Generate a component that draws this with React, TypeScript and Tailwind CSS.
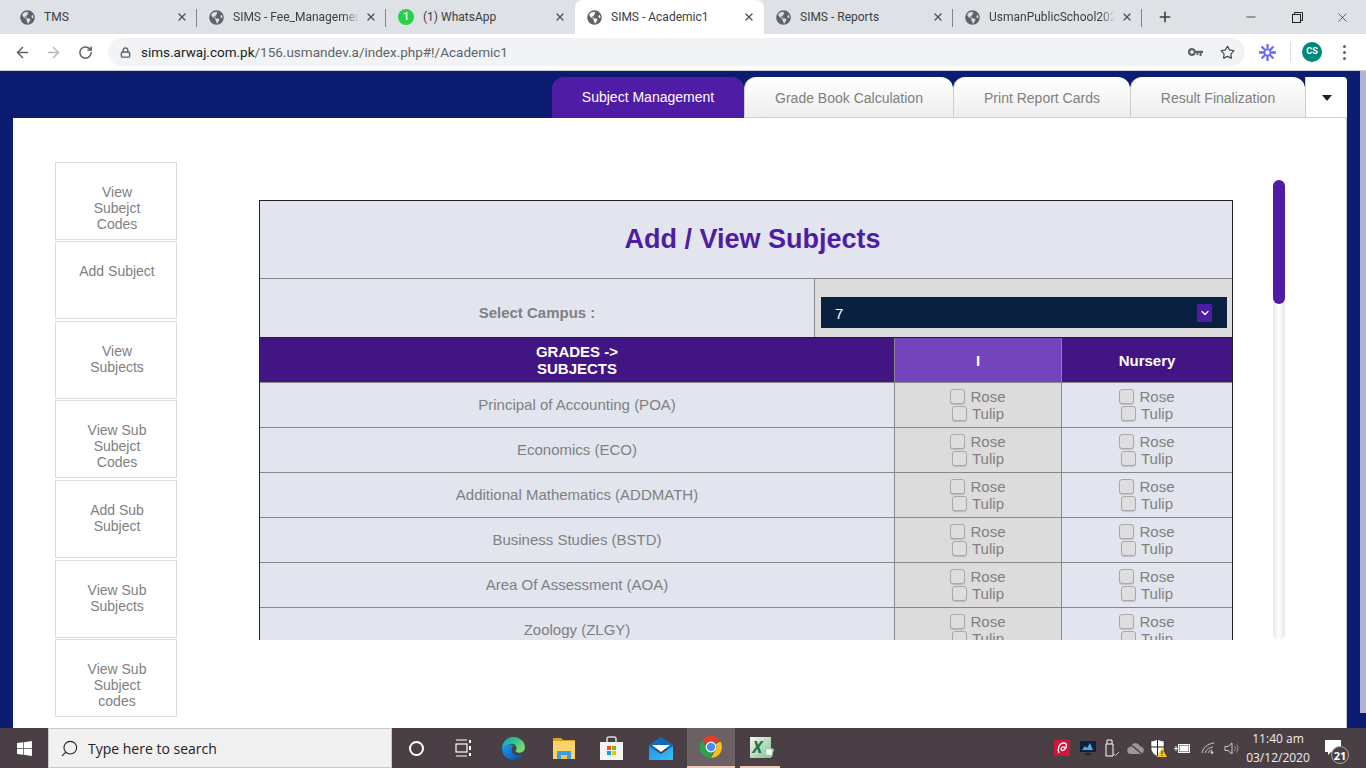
import React from "react";
import { FaGlobeAmericas, FaWindows } from "react-icons/fa";
import { ArrowLeft, ArrowRight, RotateCw, Lock, Star, X, Plus, Minus, ChevronDown, Search } from "lucide-react";

const tabs = [
  { t: "TMS" },
  { t: "SIMS - Fee_Management", fade: true },
  { t: "(1) WhatsApp", wa: true },
  { t: "SIMS - Academic1", active: true },
  { t: "SIMS - Reports" },
  { t: "UsmanPublicSchool2020", fade: true },
];

function ChromeTab({ t, fade, wa, active, sep }: { t: string; fade?: boolean; wa?: boolean; active?: boolean; sep?: boolean }) {
  return (
    <div className={`relative flex h-[34px] w-[189px] shrink-0 items-center pl-[12px] pr-[9px] ${active ? "rounded-t-[8px] bg-white" : ""}`}>
      {wa ? (
        <span className="flex h-[16px] w-[16px] shrink-0 items-center justify-center rounded-full bg-[#25d34a] text-[10px] font-bold leading-none text-white">1</span>
      ) : (
        <FaGlobeAmericas className="h-[15px] w-[15px] shrink-0 text-[#5f6368]" />
      )}
      <span className={`ml-[9px] overflow-hidden whitespace-nowrap text-[12px] text-[#3c4043] ${fade ? "w-[126px] [mask-image:linear-gradient(to_right,black_88%,transparent)]" : "w-[130px]"}`}>{t}</span>
      <X className="ml-auto h-[12px] w-[12px] shrink-0 text-[#4a4d51]" strokeWidth={2.6} />
      {sep && <span className="absolute right-0 top-[9px] h-[18px] w-px bg-[#80868b]" />}
    </div>
  );
}

function ChromeBar() {
  return (
    <div className="flex h-[34px] items-start bg-[#dee1e6] pl-[8px]" style={{ fontFamily: "Roboto, sans-serif" }}>
      {tabs.map((x, i) => (
        <ChromeTab key={x.t} {...x} sep={i === 0 || i === 1 || i === 4 || i === 5} />
      ))}
      <Plus className="ml-[15px] mt-[9px] h-[16px] w-[16px] text-[#3c4043]" strokeWidth={2.4} />
      <Minus className="ml-[71px] mt-[10px] h-[14px] w-[14px] text-[#222]" strokeWidth={1.3} />
      <svg className="ml-[34px] mt-[12px] h-[11px] w-[11px]" viewBox="0 0 11 11" fill="none" stroke="#222" strokeWidth="1">
        <rect x="0.5" y="2.5" width="8" height="8" />
        <path d="M2.5 2.5V0.5H10.5V8.5H8.5" />
      </svg>
      <X className="ml-[32px] mt-[10px] h-[15px] w-[15px] text-[#222]" strokeWidth={1.1} />
    </div>
  );
}

function Toolbar() {
  return (
    <div className="flex h-[37px] items-center border-b border-[#ccd0d5] bg-white" style={{ fontFamily: "Roboto, sans-serif" }}>
      <ArrowLeft className="ml-[14px] h-[17px] w-[17px] text-[#5f6368]" strokeWidth={2.2} />
      <ArrowRight className="ml-[14px] h-[17px] w-[17px] text-[#b6b9bd]" strokeWidth={2.2} />
      <RotateCw className="ml-[16px] h-[15px] w-[15px] text-[#5f6368]" strokeWidth={2.4} />
      <div className="ml-[15px] flex h-[28px] w-[1137px] items-center rounded-full bg-[#f1f3f4]">
        <Lock className="ml-[12px] h-[11px] w-[11px] text-[#5f6368]" strokeWidth={3} />
        <span className="ml-[10px] text-[13.5px] text-[#5f6368]"><span className="text-[#202124]">sims.arwaj.com.pk</span>/156.usmandev.a/index.php#!/Academic1</span>
        <svg className="ml-auto h-[8px] w-[15px]" viewBox="0 0 15 8" fill="#5f6368">
          <path d="M4 0a4 4 0 0 1 3.8 2.7H15V5h-1.4v3h-2V5h-1.2v2H8.5V5h-.7A4 4 0 1 1 4 0zm0 2.2a1.8 1.8 0 1 0 0 3.6 1.8 1.8 0 0 0 0-3.6z" />
        </svg>
        <Star className="ml-[17px] mr-[10px] h-[15px] w-[15px] text-[#4a4d51]" strokeWidth={2} />
      </div>
      <svg className="ml-[14px] h-[17px] w-[17px]" viewBox="0 0 18 18" stroke="#6a6cf0" strokeWidth="2.4" fill="none">
        <path d="M9 0v18M0 9h18M2.700 2.700l12.600 12.600M15.300 2.700L2.700 15.300" />
        <circle cx="9" cy="9" r="3.200" fill="#fff" strokeWidth="1.800" />
      </svg>
      <span className="ml-[14px] h-[20px] w-px bg-[#dadce0]" />
      <span className="ml-[11px] flex h-[20px] w-[20px] items-center justify-center rounded-full bg-[#00897b] text-[9px] font-bold text-white">CS</span>
      <span className="ml-[21px] flex flex-col gap-[3px]">
        <i className="h-[3px] w-[3px] rounded-full bg-[#5f6368]" />
        <i className="h-[3px] w-[3px] rounded-full bg-[#5f6368]" />
        <i className="h-[3px] w-[3px] rounded-full bg-[#5f6368]" />
      </span>
    </div>
  );
}

function PageTabs() {
  const rest = [
    { t: "Grade Book Calculation", w: "w-[209px]" },
    { t: "Print Report Cards", w: "w-[177px]" },
    { t: "Result Finalization", w: "w-[175px]" },
  ];
  return (
    <div className="flex h-[41px] pl-[539px]">
      <div className="flex h-[41px] w-[192px] items-center justify-center rounded-t-[12px] bg-[#4f1ca6] pb-[1px] text-[14px] text-white">Subject Management</div>
      {rest.map((r) => (
        <div key={r.t} className={`flex h-[41px] ${r.w} items-center justify-center rounded-t-[12px] border-b border-l border-[#cfcfcf] bg-gradient-to-b from-white to-[#eeeeee] pt-[3px] text-[14px] text-[#808080]`}>{r.t}</div>
      ))}
      <div className="flex h-[41px] w-[42px] items-center justify-center rounded-tr-[4px] border-b border-l border-[#cfcfcf] bg-white pt-[2px]">
        <span className="h-0 w-0 border-x-[5px] border-t-[6px] border-x-transparent border-t-[#222]" />
      </div>
    </div>
  );
}

const sideItems = [
  { lines: ["View", "Subejct", "Codes"], gap: "mb-[1px]" },
  { lines: ["Add Subject"], gap: "mb-[2px]" },
  { lines: ["View", "Subjects"], gap: "mb-[1px]" },
  { lines: ["View Sub", "Subejct", "Codes"], gap: "mb-[2px]" },
  { lines: ["Add Sub", "Subject"], gap: "mb-[2px]" },
  { lines: ["View Sub", "Subjects"], gap: "mb-[1px]" },
  { lines: ["View Sub", "Subject", "codes"], gap: "" },
];

function Sidebar() {
  return (
    <div className="flex w-[122px] shrink-0 flex-col">
      {sideItems.map((item, i) => (
        <div key={i} className={`h-[78px] border border-[#dddddd] pl-[2px] pt-[21px] text-center text-[14px] leading-[16px] text-[#808080] ${item.gap}`}>
          {item.lines.map((l) => (
            <div key={l}>{l}</div>
          ))}
        </div>
      ))}
    </div>
  );
}

function Check({ label }: { label: string }) {
  return (
    <div className="flex h-[17px] items-center justify-center text-[15px] leading-[17px] text-[#808080]">
      <span className="mr-[5px] h-[15px] w-[15px] rounded-[3px] border border-[#a9a9a9] bg-[#dedede] shadow-[0_1px_1px_rgba(0,0,0,0.15)]" />
      <span>{label}</span>
    </div>
  );
}

const subjects = [
  "Principal of Accounting (POA)",
  "Economics (ECO)",
  "Additional Mathematics (ADDMATH)",
  "Business Studies (BSTD)",
  "Area Of Assessment (AOA)",
  "Zoology (ZLGY)",
];

function SubjectTable() {
  return (
    <div className="w-[974px] border-x border-t border-[#222] bg-[#e2e5ee]">
      <div className="flex h-[78px] items-center justify-center border-b border-[#888] pl-[13px] text-[27px] font-bold text-[#4f1ca6]">Add / View Subjects</div>
      <div className="flex h-[58px]">
        <div className="flex w-[554px] items-center justify-center pt-[10px] text-[15px] font-bold text-[#808080]">Select Campus :</div>
        <div className="flex-1 border-l border-[#888] bg-[#dcdcdc] pl-[6px] pr-[5px] pt-[18px]">
          <div className="flex h-[31px] items-center bg-[#0a2040] pl-[14px] pr-[15px] text-[15px] text-white">
            <span className="pt-[3px]">7</span>
            <span className="ml-auto flex h-[18px] w-[15px] items-center justify-center bg-[#4f1ca6]">
              <ChevronDown className="h-[12px] w-[12px] text-white" strokeWidth={2.5} />
            </span>
          </div>
        </div>
      </div>
      <div className="flex h-[46px] border-y border-t-[#222] border-b-[#888] bg-[#421584] text-[15px] font-bold leading-[17px] text-white">
        <div className="flex w-[634px] items-center justify-center text-center">
          GRADES -&gt;<br />SUBJECTS
        </div>
        <div className="flex w-[167px] items-center justify-center border-l border-[#888] bg-[#7344bb]">I</div>
        <div className="flex flex-1 items-center justify-center border-l border-[#888]">Nursery</div>
      </div>
      {subjects.map((s) => (
        <div key={s} className="flex h-[45px] border-b border-[#888] text-[15px] text-[#808080]">
          <div className="flex w-[634px] items-center justify-center">{s}</div>
          <div className="flex w-[167px] flex-col justify-center border-l border-[#888] bg-[#dcdcdc]">
            <Check label="Rose" />
            <Check label="Tulip" />
          </div>
          <div className="flex flex-1 flex-col justify-center border-l border-[#888]">
            <Check label="Rose" />
            <Check label="Tulip" />
          </div>
        </div>
      ))}
    </div>
  );
}

function Panel() {
  return (
    <div className="flex h-[610px] overflow-hidden border-r border-[#c8c8c8] bg-white pl-[42px] pt-[44px]">
      <Sidebar />
      <div className="ml-[82px] mt-[18px] h-[460px] overflow-hidden pt-[20px]">
        <SubjectTable />
      </div>
      <div className="ml-[40px] mt-[18px] h-[460px] w-[12px] rounded-full bg-gradient-to-r from-[#e8e8ec] via-white to-[#e8e8ec]">
        <div className="h-[124px] rounded-full bg-[#4f1ca6]" />
      </div>
    </div>
  );
}

function Page() {
  return (
    <div className="flex h-[657px] bg-[#0c1c70]" style={{ fontFamily: '"Liberation Sans", Arial, sans-serif' }}>
      <div className="w-[1360px] pl-[13px] pr-[13px] pt-[6px]">
        <PageTabs />
        <Panel />
      </div>
      <div className="h-[642px] w-[6px] bg-[#b0b5d5]" />
    </div>
  );
}

function Taskbar() {
  return (
    <div className="flex h-[40px] items-center bg-[#4a3f45]" style={{ fontFamily: '"Open Sans", sans-serif' }}>
      <div className="flex h-[40px] w-[48px] items-center justify-center">
        <FaWindows className="h-[17px] w-[17px] text-white" />
      </div>
      <div className="flex h-[40px] w-[344px] items-center border border-[#c8c8c8] bg-[#f0f0f0] pl-[11px] text-[14px] text-[#222]">
        <Search className="h-[19px] w-[19px] -scale-x-100 text-[#222]" strokeWidth={1.4} />
        <span className="ml-[9px]">Type here to search</span>
      </div>
      <span className="ml-[17px] h-[15px] w-[15px] rounded-full border-2 border-white" />
      <svg className="ml-[31px] h-[18px] w-[18px]" viewBox="0 0 18 18" fill="none" stroke="#fff" strokeWidth="1.2">
        <path d="M1 1h11M1 17h11" />
        <rect x="1" y="5" width="11" height="8" />
        <path d="M15 1v3M15 7v4M15 14v3" strokeWidth="2" />
      </svg>
      <svg className="ml-[28px] h-[25px] w-[25px]" viewBox="0 0 24 24">
        <defs>
          <linearGradient id="eg" x1="0" y1="0" x2="1" y2="0.6">
            <stop offset="0" stopColor="#1a9ad6" />
            <stop offset="0.55" stopColor="#2fc48d" />
            <stop offset="1" stopColor="#7fdc6a" />
          </linearGradient>
          <linearGradient id="eb" x1="0" y1="0" x2="1" y2="1">
            <stop offset="0" stopColor="#1d9bea" />
            <stop offset="0.6" stopColor="#0f6fc6" />
            <stop offset="1" stopColor="#0b3f8a" />
          </linearGradient>
        </defs>
        <path d="M1 12C1 5.500 6 1 12 1c6.500 0 11 4.800 11 10.200 0 3-3 4.800-6 4.800-2 0-3.500-1-3-2.200 1-1 1.300-2.300.4-4C13 7.500 10.500 7 8 8 4.500 9.300 1.500 10.500 1 12z" fill="url(#eg)" />
        <path d="M1 12c0 6.500 5 11 11 11 4.500 0 8.300-2 10-6-3 2-7 2.200-9.500.5-3-2-3-6-.2-8.700C9 7.500 2.500 8.500 1 12z" fill="url(#eb)" />
      </svg>
      <svg className="ml-[27px] h-[21px] w-[22px]" viewBox="0 0 22 21">
        <path d="M0 0h8l2 2h12v4H0z" fill="#d9a21f" />
        <rect x="0" y="3" width="22" height="18" fill="#fbd368" />
        <path d="M4 21v-8h14v8h-4v-4H8v4z" fill="#3f9fe0" />
        <rect x="8" y="17" width="6" height="4" fill="#f7c244" />
      </svg>
      <svg className="ml-[25px] h-[24px] w-[23px]" viewBox="0 0 23 24">
        <path d="M7 7V3a2 2 0 0 1 2-2h5a2 2 0 0 1 2 2v4" fill="none" stroke="#ddd" strokeWidth="1.500" />
        <rect x="0" y="6" width="23" height="18" fill="#f4f4f4" />
        <rect x="7" y="10" width="4" height="4" fill="#f25022" />
        <rect x="12" y="10" width="4" height="4" fill="#7fba00" />
        <rect x="7" y="15" width="4" height="4" fill="#00a4ef" />
        <rect x="12" y="15" width="4" height="4" fill="#ffb900" />
      </svg>
      <svg className="ml-[26px] h-[23px] w-[24px]" viewBox="0 0 24 23">
        <defs>
          <linearGradient id="mb" x1="0" y1="0" x2="1" y2="1">
            <stop offset="0" stopColor="#1e8fe6" />
            <stop offset="1" stopColor="#35c4f5" />
          </linearGradient>
        </defs>
        <path d="M0 8L12 0l12 8v4H0z" fill="#0f6cbd" />
        <path d="M3 8h18l-9 7z" fill="#fff" />
        <path d="M0 9l12 8 12-8v14H0z" fill="url(#mb)" />
      </svg>
      <div className="ml-[14px] flex h-[40px] w-[48px] items-center justify-center border-b-2 border-[#f0c8b8] bg-[#6b6165]">
        <svg className="h-[24px] w-[24px]" viewBox="0 0 24 24">
          <path d="M12 1a11 11 0 0 1 9.500 5.500H12A5.500 5.500 0 0 0 7 9.500L3.300 4.900A11 11 0 0 1 12 1z" fill="#e33b2e" />
          <path d="M21.500 6.500A11 11 0 0 1 12 23l4.700-8.200A5.500 5.500 0 0 0 16.800 9z" fill="#fbc116" />
          <path d="M12 23A11 11 0 0 1 3.300 4.900L7.900 13A5.500 5.500 0 0 0 14 17z" fill="#2ca24c" />
          <circle cx="12" cy="12" r="4.800" fill="#4c8bf5" stroke="#fff" strokeWidth="1.200" />
        </svg>
      </div>
      <div className="ml-[5px] flex h-[40px] w-[40px] items-center justify-center border-b-2 border-[#f0c8b8]">
        <div className="relative flex h-[21px] w-[21px] items-center justify-start bg-gradient-to-br from-[#f2f8f3] to-[#7fc28f] pl-[3px]">
          <span className="text-[16px] font-bold italic leading-none text-[#1e7145]">X</span>
          <span className="absolute bottom-[2px] right-[-2px] h-[8px] w-[8px] rotate-12 border border-[#8fbf9b] bg-[#eef6ef]" />
        </div>
      </div>
      <div className="ml-auto flex items-center">
        <svg className="h-[16px] w-[16px]" viewBox="0 0 16 16">
          <rect width="16" height="16" fill="#d0163a" />
          <path d="M5 13C3 9 5 3 10 3c3 0 3 4 1 6s-4 2-4 0 3-3 4-1" fill="none" stroke="#fff" strokeWidth="1.300" />
        </svg>
        <svg className="ml-[10px] h-[15px] w-[16px]" viewBox="0 0 16 15">
          <rect width="16" height="11" fill="#10203a" />
          <path d="M2 9l3-4 2 2 3-5 3 7z" fill="#4ea8e8" />
          <rect x="5" y="12" width="6" height="2" fill="#222" />
        </svg>
        <svg className="ml-[9px] h-[18px] w-[14px]" viewBox="0 0 14 18" fill="none" stroke="#fff" strokeWidth="1">
          <path d="M2 5V1h5v4M1 5h7v12H1z" />
          <path d="M9 15l1.500 1.500L14 13" stroke="#bbb" />
        </svg>
        <svg className="ml-[8px] h-[13px] w-[17px]" viewBox="0 0 17 13">
          <path d="M4 12a3.500 3.500 0 0 1-.5-7A5 5 0 0 1 13 4.500a3.500 3.500 0 0 1 0 7.500z" fill="#999" />
          <path d="M2 1l13 11" stroke="#4a3f45" strokeWidth="1.500" />
        </svg>
        <svg className="ml-[6px] h-[18px] w-[17px]" viewBox="0 0 17 18">
          <path d="M7.500 0c2 1.500 4 2 6.500 2v7c0 4-3 7-6.500 8.500C4 16 1 13 1 9V2c2.500 0 4.500-.5 6.500-2z" fill="#fff" stroke="#222" strokeWidth="0.500" />
          <path d="M7.500 0v17.500M1 8h13" stroke="#222" strokeWidth="1" />
          <path d="M12 9l5 9H7z" fill="#f5c518" />
          <path d="M12 12v3M12 16v1" stroke="#222" strokeWidth="1" />
        </svg>
        <svg className="ml-[7px] h-[11px] w-[17px]" viewBox="0 0 17 11" fill="none" stroke="#fff" strokeWidth="1">
          <rect x="4.500" y="1.500" width="11" height="8" />
          <rect x="6" y="3" width="8" height="5" fill="#fff" />
          <path d="M0 5.500h4M2 3v5" />
        </svg>
        <svg className="ml-[10px] h-[12px] w-[16px]" viewBox="0 0 16 12" fill="none" stroke="#ccc" strokeWidth="1">
          <path d="M1 11C2 6 6 2 13 1M4 11c1-3 3-5 8-6M7 11c.5-1.500 1.500-2.500 4-3" />
          <circle cx="11" cy="10.500" r="1" fill="#ccc" />
        </svg>
        <svg className="ml-[7px] h-[13px] w-[16px]" viewBox="0 0 16 13" fill="none" stroke="#ccc" strokeWidth="1">
          <path d="M1 4.500h3L8 1v11L4 8.500H1z" />
          <path d="M10.500 4a3.500 3.500 0 0 1 0 5M12.500 2.500a6 6 0 0 1 0 8" stroke="#999" />
        </svg>
      </div>
      <div className="ml-[3px] w-[70px] text-center text-[12px] leading-[19px] text-[#eee]">
        <div>11:40 am</div>
        <div>03/12/2020</div>
      </div>
      <div className="relative ml-[12px] mr-[25px] h-[16px] w-[16px]">
        <svg className="h-[16px] w-[16px]" viewBox="0 0 16 16">
          <path d="M0 0h16v12H6l-3 3v-3H0z" fill="#fff" />
        </svg>
        <span className="absolute left-[6px] top-[6px] flex h-[18px] w-[18px] items-center justify-center rounded-full border border-[#aaa] bg-[#4a3f45] text-[11px] font-bold leading-none text-white">21</span>
      </div>
    </div>
  );
}

export default function App() {
  return (
    <div className="h-[768px] w-[1366px] overflow-hidden">
      <ChromeBar />
      <Toolbar />
      <Page />
      <Taskbar />
    </div>
  );
}
